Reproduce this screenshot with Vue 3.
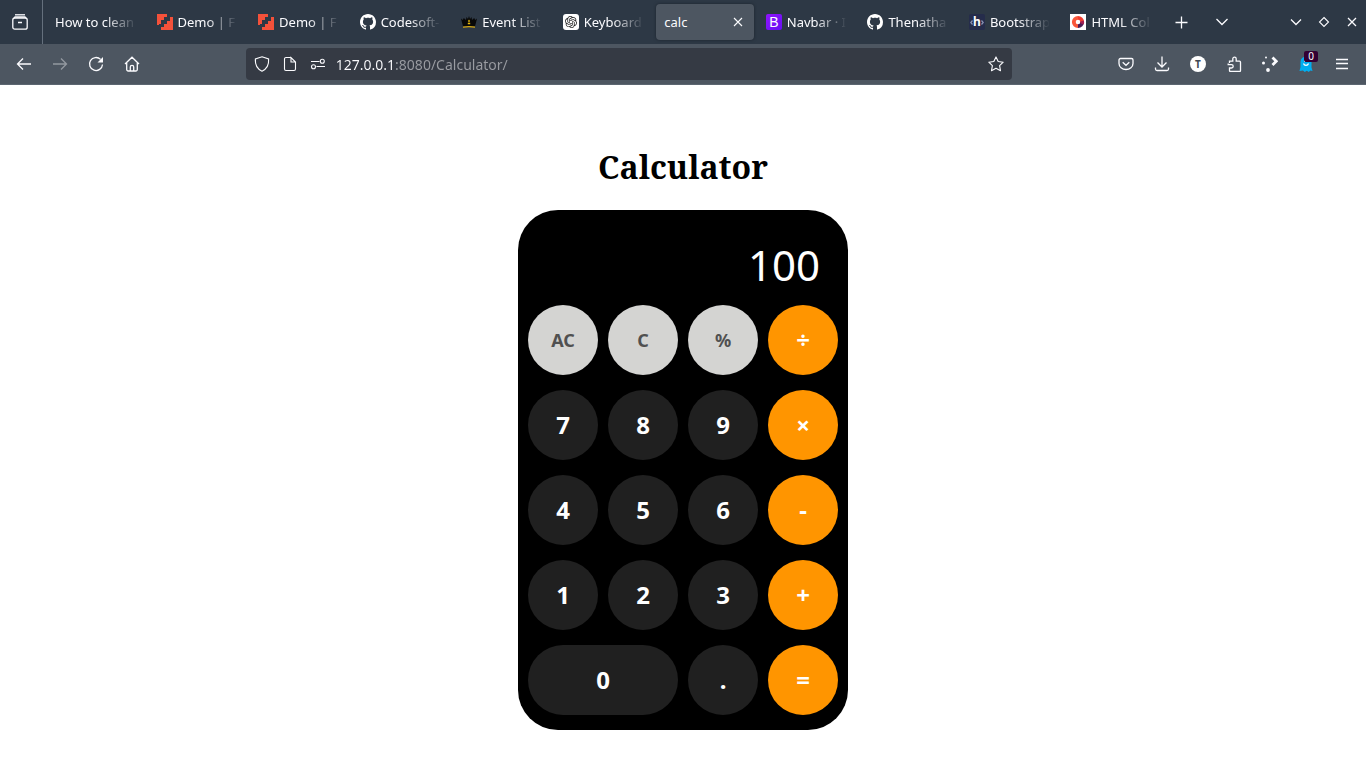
<script setup>
import { ref } from 'vue'

const tabs = [
  { title: 'How to clean', icon: '' },
  { title: 'Demo | F', icon: 'steps' },
  { title: 'Demo | F', icon: 'steps' },
  { title: 'Codesoft-', icon: 'github' },
  { title: 'Event List', icon: 'crown' },
  { title: 'Keyboard', icon: 'knot' },
  { title: 'calc', icon: '', active: true },
  { title: 'Navbar · I', icon: 'bootstrap' },
  { title: 'Thenatha', icon: 'github' },
  { title: 'Bootstrap', icon: 'hcode' },
  { title: 'HTML Col', icon: 'ring' }
]

const keys = [
  { label: 'AC', kind: 'util' }, { label: 'C', kind: 'util' }, { label: '%', kind: 'util' }, { label: '÷', kind: 'op' },
  { label: '7' }, { label: '8' }, { label: '9' }, { label: '×', kind: 'op' },
  { label: '4' }, { label: '5' }, { label: '6' }, { label: '-', kind: 'op' },
  { label: '1' }, { label: '2' }, { label: '3' }, { label: '+', kind: 'op' },
  { label: '0', kind: 'wide' }, { label: '.' }, { label: '=', kind: 'op' }
]

const display = ref('100')
const address = ref('127.0.0.1:8080/Calculator/')

function evaluate(text) {
  const tokens = text.replace(/×/g, '*').replace(/÷/g, '/').match(/\d*\.?\d+|[-+*/%]/g) || []
  const values = []
  let op = '+'
  for (const t of tokens) {
    if (/^[-+*/%]$/.test(t)) { op = t; continue }
    const n = parseFloat(t)
    if (op === '+') values.push(n)
    else if (op === '-') values.push(-n)
    else if (op === '*') values.push(values.pop() * n)
    else if (op === '/') values.push(values.pop() / n)
    else values.push(values.pop() % n)
  }
  return String(values.reduce((a, b) => a + b, 0))
}

function press(label) {
  if (label === 'AC') display.value = ''
  else if (label === 'C') display.value = display.value.slice(0, -1)
  else if (label === '=') display.value = evaluate(display.value)
  else display.value += label
}
</script>

<template>
  <div class="browser">
    <header class="tabstrip">
      <button class="view" aria-label="Recent browsing">
        <svg width="16" height="16" viewBox="0 0 16 16" class="line"><path d="M3 .8h10" /><rect x=".8" y="4" width="14.4" height="11.2" rx="2" /><path d="M2 4.200 3 3h10l1 1.200M6 8.500h4" /></svg>
      </button>
      <nav class="tabs" aria-label="Tabs">
        <div v-for="(tab, i) in tabs" :key="i" class="tab" :class="{ active: tab.active }">
          <button class="tab-main">
            <svg v-if="tab.icon === 'steps'" class="favicon" viewBox="0 0 16 16"><path fill="#f4513a" d="M0 0h10v3H7v3H4v4H0zM16 3v13H4v-3h3v-3h3V7h3V3z" /><path fill="#f4513a" d="M0 9h2v2H0z" /></svg>
            <svg v-else-if="tab.icon === 'github'" class="favicon" viewBox="0 0 16 16"><path fill="#fff" d="M8 0C3.580 0 0 3.580 0 8c0 3.540 2.290 6.530 5.470 7.590.4.070.55-.17.55-.38 0-.19-.010-.82-.010-1.490-2.010.370-2.530-.49-2.690-.94-.09-.23-.48-.94-.82-1.130-.28-.15-.68-.52-.010-.53.630-.010 1.080.580 1.230.820.720 1.210 1.870.870 2.330.660.070-.52.280-.87.510-1.070-1.780-.2-3.640-.89-3.640-3.950 0-.87.310-1.590.820-2.150-.08-.2-.36-1.020.080-2.120 0 0 .67-.21 2.200.820.640-.18 1.320-.27 2-.27s1.360.090 2 .27c1.530-1.040 2.200-.82 2.200-.82.440 1.100.160 1.920.080 2.120.510.560.820 1.270.820 2.150 0 3.070-1.870 3.750-3.650 3.950.290.250.540.730.540 1.480 0 1.070-.010 1.930-.010 2.200 0 .21.150.46.550.38A8.010 8.010 0 0 0 16 8c0-4.420-3.580-8-8-8" /></svg>
            <svg v-else-if="tab.icon === 'crown'" class="favicon" viewBox="0 0 16 16"><path fill="#080808" d="M0 4.500 1.800 6 2.800 4 5 6 5.500 3 7 5 8 2l1 3 1.500-2 .5 3 2.200-2 1 2L16 4.500 14 12.500H2z" /><path d="M2 12.600c4-.8 8-.8 12 0v1.200c-4-.7-8-.7-12 0z" fill="#d6a813" /><path fill="#e8b90d" d="m8 5.500 1 1.500-1 1.500L7 7zM6.800 8.800h2.400v1.400H6.800z" /></svg>
            <svg v-else-if="tab.icon === 'knot'" class="favicon" viewBox="0 0 32 32"><rect width="32" height="32" rx="6" fill="#fff" /><path transform="translate(4 4)" fill="#222" d="M22.282 9.821a5.985 5.985 0 0 0-.516-4.911 6.046 6.046 0 0 0-6.510-2.900A6.065 6.065 0 0 0 4.981 4.182a5.985 5.985 0 0 0-3.998 2.900 6.046 6.046 0 0 0 .743 7.097 5.980 5.980 0 0 0 .511 4.911 6.051 6.051 0 0 0 6.515 2.900A5.985 5.985 0 0 0 13.260 24a6.056 6.056 0 0 0 5.772-4.206 5.989 5.989 0 0 0 3.998-2.900 6.056 6.056 0 0 0-.748-7.073zm-9.022 12.608a4.476 4.476 0 0 1-2.876-1.041l.142-.080 4.778-2.758a.795.795 0 0 0 .393-.681v-6.737l2.020 1.169a.071.071 0 0 1 .038.052v5.583a4.504 4.504 0 0 1-4.495 4.494zm-9.661-4.125a4.471 4.471 0 0 1-.535-3.014l.142.085 4.783 2.758a.771.771 0 0 0 .781 0l5.843-3.369v2.332a.080.080 0 0 1-.033.062L9.740 19.950a4.499 4.499 0 0 1-6.141-1.646zM2.341 7.896a4.485 4.485 0 0 1 2.366-1.973V11.600a.766.766 0 0 0 .388.677l5.814 3.354-2.020 1.169a.076.076 0 0 1-.071 0l-4.830-2.787A4.504 4.504 0 0 1 2.341 7.872zm16.596 3.856L13.104 8.364 15.119 7.200a.076.076 0 0 1 .071 0l4.830 2.791a4.494 4.494 0 0 1-.677 8.104v-5.677a.790.790 0 0 0-.407-.667zm2.011-3.023-.142-.085-4.774-2.782a.776.776 0 0 0-.785 0L9.409 9.230V6.897a.066.066 0 0 1 .028-.062l4.830-2.787a4.499 4.499 0 0 1 6.680 4.660zM8.307 12.863l-2.020-1.164a.080.080 0 0 1-.038-.057V6.074a4.499 4.499 0 0 1 7.376-3.454l-.142.081L8.704 5.459a.795.795 0 0 0-.393.681zm1.098-2.365 2.602-1.500 2.607 1.500v2.999l-2.597 1.500-2.607-1.500z" /></svg>
            <span v-else-if="tab.icon === 'bootstrap'" class="favicon b-icon" aria-hidden="true">B</span>
            <span v-else-if="tab.icon === 'hcode'" class="favicon h-icon" aria-hidden="true"><svg width="16" height="16" viewBox="0 0 16 16"><path d="M3.500 6.500 1.800 8.500l1.700 2M12.500 6.500l1.700 2-1.700 2" fill="none" stroke="#8b93b5" stroke-width="1.200" /></svg><b>h</b></span>
            <svg v-else-if="tab.icon === 'ring'" class="favicon" viewBox="0 0 16 16"><path fill="#fff" d="M0 0h16v16H0z" /><g fill="none" stroke-width="3.800"><path stroke="#f9573b" d="M8 12.200A4.200 4.200 0 0 1 8 3.800" /><path stroke="#f23d30" d="M8 3.800A4.200 4.200 0 0 1 12.200 8" /><path stroke="#4c1d55" d="M12.200 8A4.200 4.200 0 0 1 8 12.200" /><path stroke="#a31f50" d="M12.100 7A4.200 4.200 0 0 1 11.800 9.800" /></g></svg>
            <span class="tab-title">{{ tab.title }}</span>
          </button>
          <button v-if="tab.active" class="close" aria-label="Close tab">
            <svg width="10" height="10" viewBox="0 0 10 10" class="line thin"><path d="m1 1 8 8M9 1 1 9" /></svg>
          </button>
        </div>
      </nav>
      <div class="strip-end">
        <button class="tool" aria-label="New tab"><svg width="13" height="13" viewBox="0 0 13 13" class="line"><path d="M6.500 .5v12M.5 6.500h12" /></svg></button>
        <button class="tool" aria-label="List all tabs"><svg width="14" height="14" viewBox="0 0 14 14" class="line"><path d="m1.500 4 5.500 5.500L12.500 4" /></svg></button>
        <div class="window-controls">
          <button aria-label="Minimize"><svg width="12" height="12" viewBox="0 0 12 12" class="line"><path d="m1 3.500 5 5 5-5" /></svg></button>
          <button aria-label="Restore"><svg width="12" height="12" viewBox="0 0 12 12" class="line thin"><path d="M6 1.500 10.500 6 6 10.500 1.500 6z" /></svg></button>
          <button aria-label="Close window"><svg width="12" height="12" viewBox="0 0 12 12" class="line"><path d="m2 2 8 8M10 2l-8 8" /></svg></button>
        </div>
      </div>
    </header>

    <div class="toolbar">
      <div class="group">
        <button class="tool" aria-label="Back"><svg width="16" height="16" viewBox="0 0 16 16" class="line"><path d="M15 8H1.500M7 2.500 1.500 8 7 13.500" /></svg></button>
        <button class="tool" aria-label="Forward" disabled><svg width="16" height="16" viewBox="0 0 16 16" class="line"><path d="M1 8h13.500M9 2.500 14.500 8 9 13.500" /></svg></button>
        <button class="tool" aria-label="Reload"><svg width="16" height="16" viewBox="0 0 16 16" class="line"><path d="M14.500 8.500A6.500 6.500 0 1 1 12.600 3.400" /><path d="M15 1v5.500H9.500z" fill="#fbfbfe" stroke="none" /></svg></button>
        <button class="tool" aria-label="Home"><svg width="16" height="16" viewBox="0 0 16 16" class="line"><path d="M1 8 8 1.200 15 8M2.700 7v6.500a1.500 1.500 0 0 0 1.500 1.500h7.600a1.500 1.500 0 0 0 1.500-1.500V7M6.300 15v-4a1.700 1.700 0 0 1 3.400 0v4" /></svg></button>
      </div>
      <span class="spring"></span>
      <div class="urlbar">
        <button class="mini" aria-label="Tracking protection"><svg width="16" height="16" viewBox="0 0 16 16" class="line thin"><path d="M8 .8 14.600 3c.4 5-1 9.500-6.600 12.200C2.400 12.500 1 8 1.400 3z" /></svg></button>
        <button class="mini" aria-label="Site information"><svg width="16" height="16" viewBox="0 0 16 16" class="line thin"><path d="M9 1.500H4A1.500 1.500 0 0 0 2.500 3v10A1.500 1.500 0 0 0 4 14.500h8a1.500 1.500 0 0 0 1.500-1.500V6L9 1.500V6h4.500" /></svg></button>
        <button class="mini" aria-label="Permissions"><svg width="16" height="16" viewBox="0 0 16 16" class="line thin"><path d="M1 5.500h8.500M6.500 10.500H15" /><circle cx="12.300" cy="5.200" r="2" /><circle cx="3.500" cy="10.800" r="2" /></svg></button>
        <input v-model="address" class="address" type="text" aria-label="Address" spellcheck="false" />
        <button class="mini" aria-label="Bookmark this page"><svg width="16" height="16" viewBox="0 0 16 16" class="line thin"><path stroke-linejoin="round" d="m8 .9 2.200 4.600 5 .7-3.600 3.500.9 5L8 12.300l-4.500 2.400.9-5L.8 6.200l5-.7z" /></svg></button>
      </div>
      <span class="spring"></span>
      <div class="group">
        <button class="tool" aria-label="Save to Pocket"><svg width="16" height="16" viewBox="0 0 16 16" class="line"><path d="M2.500 2.500h11A1.500 1.500 0 0 1 15 4v3.500a7 6 0 0 1-14 0V4a1.500 1.500 0 0 1 1.500-1.500z" /><path d="m4.700 6.300 3.300 3 3.300-3" /></svg></button>
        <button class="tool" aria-label="Downloads"><svg width="16" height="16" viewBox="0 0 16 16" class="line"><path d="M8 .5v10M3.500 6.500 8 11l4.500-4.500M1.500 11.500V13A1.500 1.500 0 0 0 3 14.500h10a1.500 1.500 0 0 0 1.500-1.500v-1.500" /></svg></button>
        <button class="tool" aria-label="Account"><span class="avatar">T</span></button>
        <button class="tool" aria-label="Extensions"><svg width="16" height="16" viewBox="0 0 16 16" class="line"><path d="M3.500 7V5.200h3.300V2.800a1.700 1.700 0 0 1 3.400 0v2.400h3.300a1 1 0 0 1 1 1V14.500a1 1 0 0 1-1 1H4.500a1 1 0 0 1-1-1V12H5.500a1.700 1.700 0 0 0 0-3.400H2.200V7.500" /></svg></button>
        <button class="tool" aria-label="Dotted arrow"><svg width="16" height="16" viewBox="0 0 16 16" fill="#fbfbfe"><circle cx="4" cy="1.500" r="1" /><circle cx="1.500" cy="7" r="1.500" /><circle cx="6" cy="14" r="1.900" /><path d="m10.500 1.500 3.800 3.800-3.800 3.800" fill="none" stroke="#fbfbfe" stroke-width="2.800" /></svg></button>
        <button class="tool ghost" aria-label="Ghostery">
          <svg width="16" height="16" viewBox="0 0 16 16"><path fill="#00aef0" d="M2.500 6a5.500 5.500 0 0 1 11 0v5.500l1 3.500-2.200-.5-1.500 1.500-2-1.200L6.800 16 5 14.500 1.500 15l1-4z" /><path d="M5.500 7.500a2.600 2.600 0 0 0 5 0" fill="none" stroke="#fff" stroke-width="1.200" /><path d="M6.500 4v2M9.500 4v2" stroke="#fff" /></svg>
          <span class="badge">0</span>
        </button>
        <button class="tool" aria-label="Menu"><svg width="14" height="14" viewBox="0 0 14 14" class="line"><path d="M1 2.500h12M1 6.500h12M1 11.500h12" /></svg></button>
      </div>
    </div>

    <main class="page">
      <h1>Calculator</h1>
      <section class="calculator" aria-label="Calculator">
        <input v-model="display" class="display" type="text" aria-label="Result" readonly />
        <div class="keys">
          <button v-for="key in keys" :key="key.label" class="key" :class="key.kind" @click="press(key.label)">{{ key.label }}</button>
        </div>
      </section>
    </main>
  </div>
</template>

<style>
body {
  margin: 0;
  background: #fff;
}
</style>

<style scoped>
.browser {
  font-family: "Noto Sans", sans-serif;
  color: #fbfbfe;
}

button,
input {
  margin: 0;
  padding: 0;
  border: 0;
  background: none;
  color: inherit;
  font: inherit;
  outline: none;
}

svg {
  display: block;
  flex: none;
}

.line {
  fill: none;
  stroke: #fbfbfe;
  stroke-width: 1.3;
}

.thin {
  stroke-width: 1.1;
}

.tabstrip {
  display: flex;
  height: 44px;
  background: #2d3845;
}

.view {
  display: grid;
  place-items: center;
  width: 43px;
  padding-right: 2px;
  border-right: 1px solid #65707d;
}

.tabs {
  display: flex;
  flex: 1;
  min-width: 0;
  padding-left: 2px;
  font-size: 13px;
}

.tab {
  display: flex;
  flex: 1 1 0;
  align-items: center;
  min-width: 0;
  margin: 4px 2px;
  padding: 0 8px;
  border-radius: 4px;
}

.tab.active {
  background: #4d5661;
  box-shadow: 0 0 3px #1b232d;
}

.tab-main {
  display: flex;
  flex: 1;
  align-items: center;
  gap: 5px;
  min-width: 0;
  height: 36px;
  text-align: left;
}

.favicon {
  flex: none;
  width: 16px;
  height: 16px;
}

.b-icon {
  border-radius: 2px;
  background: linear-gradient(135deg, #9013fe, #6610f2);
  font-family: "Liberation Sans", sans-serif;
  font-size: 14px;
  line-height: 16px;
  text-align: center;
}

.h-icon {
  display: grid;
  border-radius: 2px;
  background: #252c4b;
  font-size: 12px;
  line-height: 15px;
  text-align: center;
}

.h-icon > * {
  grid-area: 1 / 1;
}

.tab-title {
  flex: 1;
  min-width: 0;
  overflow: hidden;
  white-space: nowrap;
  mask-image: linear-gradient(to left, transparent, #000 32px);
}

.active .tab-title {
  mask-image: none;
}

.close {
  display: grid;
  place-items: center;
  width: 16px;
  height: 24px;
}

.strip-end {
  display: flex;
  box-sizing: border-box;
  align-items: center;
  gap: 5px;
  width: 204px;
  padding-left: 1px;
}

.window-controls {
  display: flex;
  margin-left: auto;
}

.window-controls button {
  display: grid;
  place-items: center;
  width: 28px;
  height: 28px;
}

.toolbar {
  display: flex;
  align-items: center;
  height: 40px;
  padding: 0 6px;
  border-bottom: 1px solid #5c6671;
  background: #4d5661;
}

.group {
  display: flex;
}

.tool {
  display: grid;
  place-items: center;
  width: 36px;
  height: 32px;
}

.tool:disabled {
  opacity: 0.4;
}

.spring {
  flex: 1 1 1px;
}

.urlbar {
  display: flex;
  flex: 8 1 0;
  align-items: center;
  gap: 4px;
  min-width: 0;
  height: 32px;
  padding: 0 4px;
  border-radius: 4px;
  background: #353a44;
}

.mini {
  display: grid;
  place-items: center;
  width: 24px;
  height: 28px;
}

.address {
  flex: 1;
  min-width: 0;
  margin-left: 2px;
  padding-top: 2px;
  background: linear-gradient(to right, #fbfbfe 60px, #9a9ca2 60px);
  background-clip: text;
  color: transparent;
  font-size: 14px;
  line-height: 24px;
}

.avatar {
  width: 16px;
  border-radius: 50%;
  background: #fff;
  color: #3f4751;
  font-size: 10px;
  font-weight: 700;
  line-height: 16px;
}

.ghost {
  position: relative;
}

.badge {
  position: absolute;
  top: 3px;
  right: 6px;
  width: 14px;
  border-radius: 2px;
  background: #330033;
  font-size: 10px;
  line-height: 11px;
}

.page {
  display: flex;
  flex-direction: column;
  align-items: center;
  padding-top: 60px;
}

h1 {
  margin: 0;
  color: #000;
  font-family: "Noto Serif", "Liberation Serif", serif;
  font-size: 32px;
  font-weight: 700;
  line-height: 44px;
}

.calculator {
  box-sizing: border-box;
  width: 330px;
  margin-top: 21px;
  padding: 25px 10px 15px;
  border-radius: 40px;
  background: #000;
}

.display {
  display: block;
  box-sizing: border-box;
  width: 100%;
  height: 60px;
  margin-bottom: 10px;
  padding-right: 18px;
  color: #fff;
  font-size: 42px;
  line-height: 60px;
  text-align: right;
}

.keys {
  display: grid;
  grid-template-columns: repeat(4, 1fr);
  gap: 15px 10px;
}

.key {
  height: 70px;
  padding-bottom: 2px;
  border-radius: 35px;
  background: #202020;
  color: #fff;
  font-size: 24px;
  font-weight: 700;
}

.key.util {
  padding-bottom: 0;
  background: #d4d4d2;
  color: #505050;
  font-size: 18px;
}

.key.op {
  background: #ff9500;
}

.key.wide {
  grid-column: span 2;
}
</style>
